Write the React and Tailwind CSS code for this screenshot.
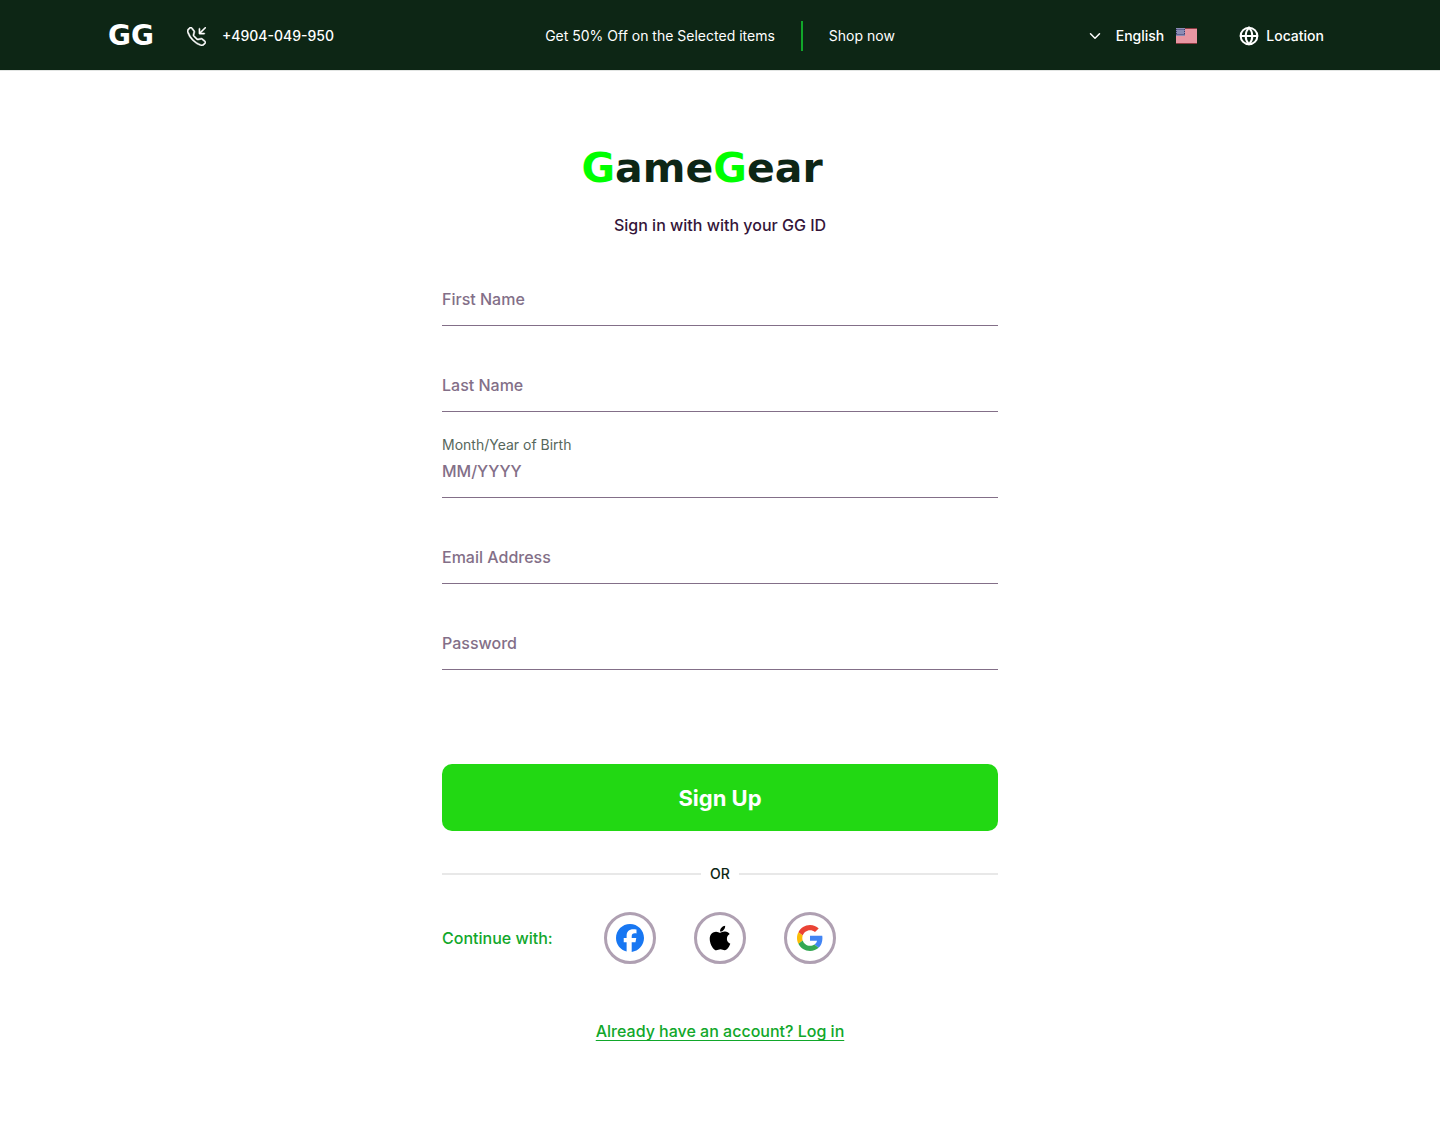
import { useState } from "react"
import { Globe, ChevronDown } from "lucide-react"
import { BsTelephoneInbound } from "react-icons/bs"
import { FaApple } from "react-icons/fa"
import { FaFacebook } from "react-icons/fa6"

const FIELDS = [
    { name: "firstName", placeholder: "First Name", type: "text" },
    { name: "lastName", placeholder: "Last Name", type: "text" },
    { name: "birth", label: "Month/Year of Birth", placeholder: "MM/YYYY", type: "text" },
    { name: "email", placeholder: "Email Address", type: "email" },
    { name: "password", placeholder: "Password", type: "password" },
]

const PROVIDERS = [
    { name: "Facebook", icon: <FaFacebook className="size-7 text-[#1877f2]" /> },
    { name: "Apple", icon: <FaApple className="size-7 text-black" /> },
    { name: "Google", icon: <GoogleIcon /> },
]

function GoogleIcon() {
    return (
        <svg className="size-[26px]" viewBox="0 0 48 48" aria-hidden="true">
            <path fill="#ea4335" d="M24 9.5c3.54 0 6.71 1.22 9.21 3.6l6.85-6.85C35.9 2.38 30.47 0 24 0 14.62 0 6.51 5.38 2.56 13.22l7.98 6.19C12.43 13.72 17.74 9.5 24 9.5z" />
            <path fill="#4285f4" d="M46.98 24.55c0-1.57-.15-3.09-.38-4.55H24v9.02h12.94c-.58 2.96-2.26 5.48-4.78 7.18l7.73 6c4.51-4.18 7.09-10.36 7.09-17.65z" />
            <path fill="#fbbc05" d="M10.53 28.59c-.48-1.45-.76-2.99-.76-4.59s.27-3.14.76-4.59l-7.98-6.19C.92 16.46 0 20.12 0 24c0 3.88.92 7.54 2.56 10.78l7.97-6.19z" />
            <path fill="#34a853" d="M24 48c6.48 0 11.93-2.13 15.89-5.81l-7.73-6c-2.15 1.45-4.92 2.3-8.16 2.3-6.26 0-11.57-4.22-13.47-9.91l-7.98 6.19C6.51 42.62 14.62 48 24 48z" />
        </svg>
    )
}

function Flag() {
    return (
        <svg className="h-4 w-[21px]" viewBox="0 0 21 16" aria-hidden="true">
            <rect width="21" height="16" fill="#e896a2" />
            <path d="M0 .5H21M0 15.5H21" stroke="#8c3a42" />
            <rect width="9" height="8" fill="#8c8cb4" />
            <path d="M.5 1.5H9M.5 6.5H9" stroke="#3c3b6e" strokeDasharray="1 1" />
            <path d="M.5 1V7M8.5 1V7" stroke="#3c3b6e" strokeDasharray="1 1" />
        </svg>
    )
}

function TopBar() {
    return (
        <header className="grid h-[71px] grid-cols-[1fr_auto_1fr] items-center border-b border-[#e2e5e3] bg-[#0d2615] bg-clip-padding px-[108px] pt-0.5 text-sm text-white">
            <div className="flex items-center">
                <a href="#" className="font-['DejaVu_Sans',sans-serif] text-[28px] leading-8 font-bold">GG</a>
                <a href="tel:+4904049950" className="ml-[33px] flex items-center gap-4 font-medium">
                    <BsTelephoneInbound className="size-[19px] stroke-current stroke-[0.4]" />
                    +4904-049-950
                </a>
            </div>
            <div className="flex items-center">
                <p>Get 50% Off on the Selected items</p>
                <span className="mx-[26px] h-[30px] w-0.5 bg-[#11a72a]" />
                <a href="#">Shop now</a>
            </div>
            <div className="flex items-center justify-end pr-2 font-medium">
                <button type="button" className="flex items-center gap-3">
                    <ChevronDown className="size-[18px]" />
                    English
                    <Flag />
                </button>
                <a href="#" className="ml-[42px] flex items-center gap-[7px]">
                    <Globe className="size-5" strokeWidth={2.4} />
                    Location
                </a>
            </div>
        </header>
    )
}

function Field({ name, label, placeholder, type, value, onChange }) {
    return (
        <div className="flex h-[86px] flex-col justify-end">
            {label && (
                <label htmlFor={name} className="text-sm text-[#57675c]">
                    {label}
                </label>
            )}
            <input
                id={name}
                name={name}
                type={type}
                placeholder={placeholder}
                aria-label={label ? undefined : placeholder}
                value={value}
                onChange={onChange}
                className="w-full border-b border-[#836f88] pt-1 pb-3.5 text-base font-medium text-[#341539] placeholder-[#836f88] focus:border-[#11a72a] focus:outline-none"
            />
        </div>
    )
}

export default function App() {
    const [values, setValues] = useState({})

    const handleChange = (e) => {
        setValues({ ...values, [e.target.name]: e.target.value })
    }

    return (
        <div className="min-h-screen bg-white font-['Inter',sans-serif]">
            <TopBar />

            <main className="mx-auto flex max-w-[556px] flex-col pt-[77px] pb-24">
                <h1 className="pr-9 text-center font-['DejaVu_Sans',sans-serif] text-[41px] leading-10 font-bold text-[#0d2615]">
                    <span className="text-[#00ff00]">G</span>ame<span className="text-[#00ff00]">G</span>ear
                </h1>
                <p className="mt-[25px] text-center font-medium text-[#341539]">Sign in with with your GG ID</p>

                <form onSubmit={(e) => e.preventDefault()} className="mt-[3px]">
                    {FIELDS.map((field) => (
                        <Field
                            key={field.name}
                            {...field}
                            value={values[field.name] || ""}
                            onChange={handleChange}
                        />
                    ))}
                    <button
                        type="submit"
                        className="mt-[94px] h-[67px] w-full rounded-[10px] bg-[#22d813] pt-0.5 text-[22px] font-bold text-white"
                    >
                        Sign Up
                    </button>
                </form>

                <div className="mt-[33px] flex items-center gap-[9px] text-sm font-medium text-[#0d2615]">
                    <span className="h-0.5 flex-1 bg-[#e8e8e8]" />
                    OR
                    <span className="h-0.5 flex-1 bg-[#e8e8e8]" />
                </div>

                <div className="mt-7 flex items-center">
                    <p className="font-medium text-[#11a72a]">Continue with:</p>
                    <div className="ml-[51px] flex gap-[38px]">
                        {PROVIDERS.map(({ name, icon }) => (
                            <button
                                key={name}
                                type="button"
                                aria-label={name}
                                className="flex size-[52px] items-center justify-center rounded-full border-3 border-[#afa0b2]"
                            >
                                {icon}
                            </button>
                        ))}
                    </div>
                </div>

                <a href="#" className="mt-[55px] self-center font-medium text-[#11a72a] underline underline-offset-3">
                    Already have an account? Log in
                </a>
            </main>
        </div>
    )
}
